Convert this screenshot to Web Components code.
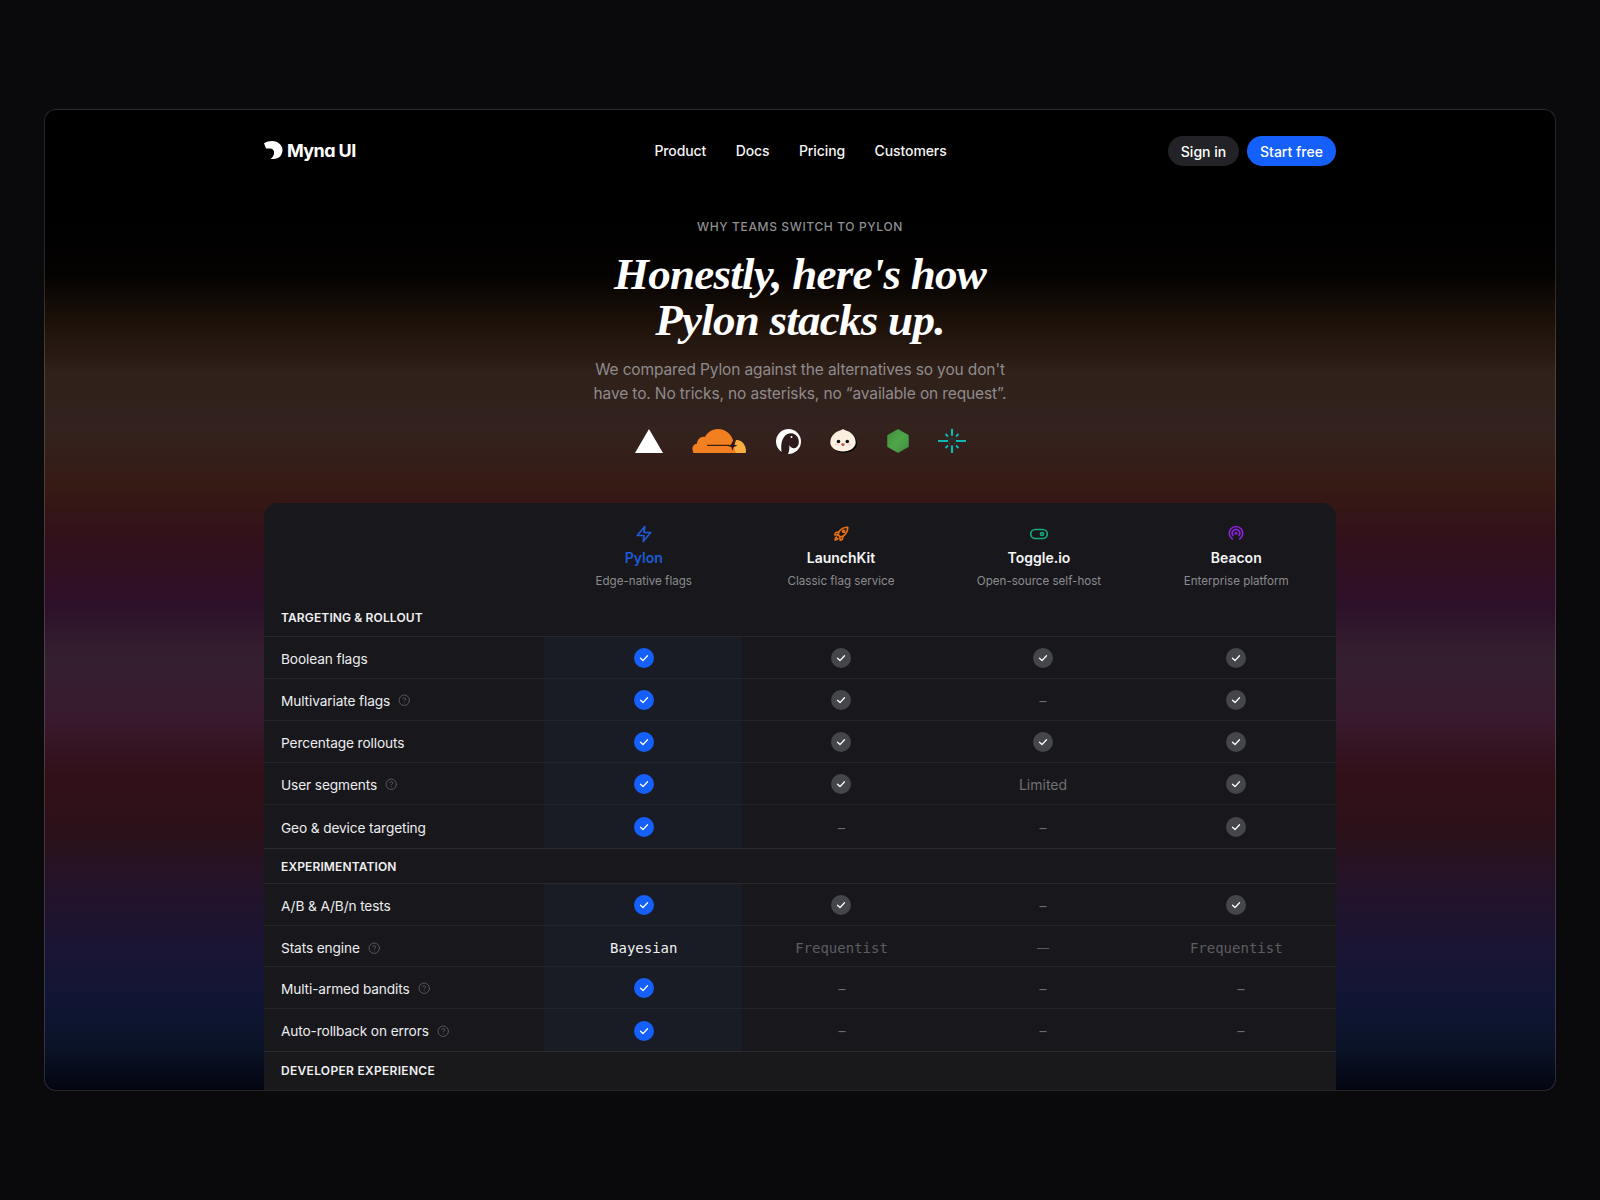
<!DOCTYPE html>
<html lang="en">
<head>
<meta charset="utf-8">
<title>Myna UI — Pylon comparison</title>
<style>
  html,body{margin:0;background:#0a0a0c;font-family:Inter,"Liberation Sans",sans-serif;color:#fff}
  body{display:flex;justify-content:center;padding-top:109px;height:1091px;overflow:hidden}
</style>
</head>
<body>
<app-frame>
  <site-nav></site-nav>
  <hero-block></hero-block>
  <brand-logos></brand-logos>
  <compare-table>
    <vendor-head></vendor-head>
    <section-row first>Targeting &amp; rollout</section-row>
    <feature-row cells="blue|gray|gray+4|gray" >Boolean flags</feature-row>
    <feature-row info cells="blue|gray|dash+4|gray">Multivariate flags</feature-row>
    <feature-row cells="blue|gray|gray+4|gray">Percentage rollouts</feature-row>
    <feature-row info cells="blue|gray|text:Limited+4|gray">User segments</feature-row>
    <feature-row end tall cells="blue|dash+.5|dash+4|gray">Geo &amp; device targeting</feature-row>
    <section-row>Experimentation</section-row>
    <feature-row cells="blue|gray|dash+4|gray">A/B &amp; A/B/n tests</feature-row>
    <feature-row info short cells="mono:Bayesian|mute:Frequentist+.5|mdash+4|mute:Frequentist">Stats engine</feature-row>
    <feature-row info cells="blue|dash+1|dash+4|dash+4">Multi-armed bandits</feature-row>
    <feature-row info end cells="blue|dash+1|dash+4|dash+4">Auto-rollback on errors</feature-row>
    <section-row tail>Developer experience</section-row>
  </compare-table>
</app-frame>

<script>
const shadow = (el, html) => { el.attachShadow({mode:'open'}).innerHTML = html; };

customElements.define('app-frame', class extends HTMLElement {
  constructor(){ super(); shadow(this, `<style>
    :host{display:block;width:1512px;height:982px;box-sizing:border-box;border:1px solid rgba(255,255,255,.15);border-radius:12px;overflow:hidden;
      background:linear-gradient(180deg,#000 0,#000 108px,#050302 166px,#1a0f08 206px,#30211a 263px,#33221e 321px,#361a14 378px,#32101c 435px,#2d1029 493px,#35202f 550px,#381a2e 608px,#321019 665px,#2b1119 722px,#23132a 780px,#1a1433 837px,#101633 895px,#0a1226 941px,#030510 981px)}
    .wrap{width:1072px;margin:0 auto;padding-top:26px;display:flex;flex-direction:column}
  </style><div class="wrap"><slot></slot></div>`); }
});

customElements.define('site-nav', class extends HTMLElement {
  constructor(){ super(); shadow(this, `<style>
    :host{display:grid;grid-template-columns:1fr auto 1fr;align-items:center;height:30px;font-size:14px;font-weight:450;color:#fff}
    .logo{display:flex;align-items:center;gap:4px;margin-top:-2px;font-size:18px;font-weight:700;letter-spacing:-.6px;font-feature-settings:"cv11"}
    .logo svg{display:block}
    nav{display:flex;gap:29.500px;margin:-2px 0 0 1px}
    nav a{color:#f4f4f5;letter-spacing:-.1px}
    .btns{display:flex;gap:8px;justify-content:flex-end}
    .b{height:30px;border-radius:15px;display:flex;align-items:center;justify-content:center;box-sizing:border-box}
    .s{width:71px;background:#232327}
    .p{width:89px;background:#1560fb}
  </style>
  <div class="logo"><svg width="19" height="18" viewBox="0 0 19 18"><path fill="#fff" d="M0 2.200C2.500.7 5 0 8 0c6 0 10.500 4 10.500 9 0 5-3.500 9-9 9H6.500c2.500-1.500 4-4.500 3.500-7.500-.4-2-2-3-4-3H2Z"/></svg><span>Myna UI</span></div>
  <nav><a>Product</a><a>Docs</a><a>Pricing</a><a>Customers</a></nav>
  <div class="btns"><div class="b s">Sign in</div><div class="b p">Start free</div></div>`); }
});

customElements.define('hero-block', class extends HTMLElement {
  constructor(){ super(); shadow(this, `<style>
    :host{display:flex;flex-direction:column;align-items:center;text-align:center;padding-top:53px}
    .eb{font-size:12px;line-height:16px;font-weight:500;letter-spacing:.63px;color:#8f8f92}
    h1{margin:16px 0 0;font:italic 700 45px/46px "Liberation Serif",serif;letter-spacing:-.75px;color:#fff}
    p{margin:15px 0 0;font-size:15.500px;line-height:24px;color:#8f8b8c;letter-spacing:-.13px}
  </style>
  <div class="eb">WHY TEAMS SWITCH TO PYLON</div>
  <h1>Honestly, here's how<br>Pylon stacks up.</h1>
  <p>We compared Pylon against the alternatives so you don't<br>have to. No tricks, no asterisks, no “available on request”.</p>`); }
});

customElements.define('brand-logos', class extends HTMLElement {
  constructor(){ super(); shadow(this, `<style>
    :host{display:flex;justify-content:center;align-items:center;gap:29.500px;margin:23px 0 0 1px;height:24px}
    svg{display:block;flex:none}
  </style>
  <svg width="28" height="24" viewBox="0 0 28 24"><path fill="#fff" d="M14 0 28 24H0Z"/></svg>
  <svg width="54" height="24" viewBox="0 0 54 24">
    <path fill="#fbad41" d="M40 24 44 11c6-.5 10 5 10 11.500 0 1-.5 1.500-1.500 1.500Z"/>
    <path fill="#f38020" d="M1.500 24C-.5 20 0 15.500 5 14.500 5.500 10 9 7 13 8 15 4 19.500 0 26 0c7 0 12.500 4 15 11v5l3 8Z"/>
    <rect x="15" y="15.800" width="22" height="1.100" fill="#2b1816"/>
    <path fill="#2b1816" d="m40.500 12 1.200 3.500 3.800 1.200-3.800 1.300-1.200 3.800-1.200-3.800-4.300-1.300 4.300-1.200Z"/>
  </svg>
  <svg width="25" height="25" viewBox="0 0 25 25">
    <circle cx="12.500" cy="12.500" r="12.500" fill="#fff"/>
    <path fill="#2d1a1a" d="M6 25C5 20 4.500 13 8 8c2.500-3.700 7.500-4.800 11-2.500 3.500 2.300 4.500 6.500 3.500 10-1 3-3.500 4.300-6 3.500-1.500-.5-2.500-1.500-3-3-.2 3 0 6-1.500 9Z"/>
    <circle cx="15.500" cy="8" r="1" fill="#fff"/>
  </svg>
  <svg width="27" height="24" viewBox="0 0 27 24">
    <path fill="#000" transform="translate(1.300 1.300)" d="M13 0c2 1.500 5 1.500 8 4 3.500 2.800 4.700 6 4.700 9.500 0 5-5.700 9-12.700 9S.3 18.500.3 13.500C.3 10 1.500 6.800 5 4c3-2.500 6-2.500 8-4Z"/>
    <path fill="#fbf0df" d="M13 0c2 1.500 5 1.500 8 4 3.500 2.800 4.700 6 4.700 9.500 0 5-5.700 9-12.700 9S.3 18.500.3 13.500C.3 10 1.500 6.800 5 4c3-2.500 6-2.500 8-4Z"/>
    <circle cx="8.500" cy="12.500" r="1.800" fill="#111"/><circle cx="17.300" cy="12.500" r="1.800" fill="#111"/>
    <path fill="#c8323c" d="M11.300 14.500h3.400c0 1.600-.8 2.400-1.700 2.400s-1.700-.8-1.700-2.400Z"/>
    <ellipse cx="6.300" cy="15.300" rx="1.600" ry=".9" fill="#f7c6c6"/><ellipse cx="19.700" cy="15.300" rx="1.600" ry=".9" fill="#f7c6c6"/>
  </svg>
  <svg width="22" height="24" viewBox="0 0 22 24">
    <defs><linearGradient id="g" x1="0" y1="0" x2="1" y2="1"><stop offset="0" stop-color="#3f8f3c"/><stop offset=".5" stop-color="#4fa54a"/><stop offset="1" stop-color="#3c8f40"/></linearGradient></defs>
    <path fill="url(#g)" stroke="url(#g)" stroke-width="1.500" stroke-linejoin="round" d="M11 1 21 6.700v10.600L11 23 1 17.300V6.700Z"/>
  </svg>
  <svg width="28" height="24" viewBox="0 0 28 24" stroke="#13b5b5" stroke-linecap="butt" fill="none">
    <path stroke-width="2.200" d="M0 12h10M18 12h10M14 0v6.700M14 16.500V24"/>
    <path stroke-width="1.800" d="m7.500 5 2.500 2.500M20.500 5 18 7.500M7.500 19 10 16.500M20.500 19 18 16.500"/>
    <path stroke="#1e3c3a" stroke-width="1.500" d="M11.500 16v-6.500h5V16"/>
  </svg>`); }
});

customElements.define('compare-table', class extends HTMLElement {
  constructor(){ super(); shadow(this, `<style>
    :host{display:block;margin-top:50px;background:#18181c;border-radius:14px 14px 0 0;font-size:13.700px;color:#ececee}
  </style><slot></slot>`); }
});

customElements.define('vendor-head', class extends HTMLElement {
  constructor(){ super();
    const col = (name,desc,color,icon,cls='') => `<div class="c ${cls}"><svg width="18" height="18" viewBox="0 0 24 24" fill="none" stroke="${color}" stroke-width="2.200" stroke-linecap="round" stroke-linejoin="round">${icon}</svg><b style="${cls=='p'?'color:'+color:''}">${name}</b><span>${desc}</span></div>`;
    shadow(this, `<style>
    :host{display:grid;grid-template-columns:280px repeat(4,198px);height:97px}
    .c{display:flex;flex-direction:column;align-items:center;padding-top:22px;box-sizing:border-box}
    .c svg{display:block}
    .p{padding-left:1.500px}
    .t{padding-right:1.500px}
    b{margin-top:5px;font-size:14px;line-height:20px;font-weight:600;color:#f4f4f5}
    span{margin-top:5px;font-size:11.600px;line-height:16px;color:#8b8b8f}
  </style><div></div>`
    + col('Pylon','Edge-native flags','#1d5bd8','<path d="M13 2 3 14h9l-1 8 10-12h-9l1-8z"/>','p')
    + col('LaunchKit','Classic flag service','#e86f15','<path d="M9.500 14.500C8 13 8 10.500 10 8c3-3.500 7-5 11-5 0 4-1.500 8-5 11-2.500 2-5 2-6.500.5Z"/><path d="M9 9.500 5 10l-1.500 3 4 .5"/><path d="m14.500 15-.5 4-3 1.500-.5-4"/><path d="M6 16c-1.500 1-2 4-2 4s3-.5 4-2"/><circle cx="15.500" cy="8.500" r="1.300"/>')
    + col('Toggle.io','Open-source self-host','#14a97f','<rect x="1" y="6" width="22" height="12" rx="6"/><circle cx="16" cy="12" r="2"/>')
    + col('Beacon','Enterprise platform','#8a22d6','<path d="M16.850 18.580a9 9 0 1 0-9.700 0"/><path d="M8 14a5 5 0 1 1 8 0"/><circle cx="12" cy="11" r="1"/>','t'));
  }
});

customElements.define('section-row', class extends HTMLElement {
  constructor(){ super(); shadow(this, `<style>
    :host{display:flex;align-items:center;box-sizing:border-box;height:35px;padding:0 17px;border-bottom:1px solid rgba(255,255,255,.07);
      font-size:12px;font-weight:600;letter-spacing:.13px;text-transform:uppercase;color:#f0f0f2}
    :host([first]){height:37px;padding-bottom:2px}
    :host([tail]){height:38px;padding-bottom:1px;border-bottom:0;background:#19191c;letter-spacing:.3px}
  </style><slot></slot>`); }
});

customElements.define('status-cell', class extends HTMLElement {
  constructor(){ super();
    const [spec, shift] = (this.getAttribute('spec')).split('+');
    const [kind, txt] = spec.split(':');
    const check = `<svg width="12" height="12" viewBox="0 0 12 12" fill="none" stroke="#fff" stroke-width="1.300" stroke-linecap="round" stroke-linejoin="round"><path d="M2.500 6.300 5 8.600 9.500 3.800"/></svg>`;
    const body = {
      blue:`<i class="dot bl">${check}</i>`, gray:`<i class="dot gr">${check}</i>`,
      dash:`<span class="da">–</span>`, mdash:`<span class="em">—</span>`,
      text:`<span class="tx">${txt}</span>`, mono:`<span class="mono">${txt}</span>`, mute:`<span class="mute">${txt}</span>`
    }[kind];
    shadow(this, `<style>
      :host{display:flex;align-items:center;justify-content:center;box-sizing:border-box;padding-top:1px;padding-left:${(shift||0)*2}px}
      :host([low]){padding-top:3px}
      :host([lead]){background:#191c25;padding-left:1.500px}
      :host([last]){padding-right:1.500px}
      .dot{display:flex;align-items:center;justify-content:center;width:20px;height:20px;border-radius:50%}
      .bl{background:#1560fb}.gr{background:#45464b}
      .da{color:#6c6c70;font-size:14px}
      .em{color:#5d5d62;font-size:12px}
      .tx{color:#707074;font-size:14px}
      .mono,.mute{font:14px "DejaVu Sans Mono",monospace}
      .mono{color:#f0f0f2}.mute{color:#5d5d62}
    </style>${body}`);
  }
});

customElements.define('feature-row', class extends HTMLElement {
  constructor(){ super();
    const cells = this.getAttribute('cells').split('|');
    const low = this.hasAttribute('short') ? ' low' : '';
    const info = this.hasAttribute('info') ? `<svg width="12.500" height="12.500" viewBox="0 0 24 24" fill="none" stroke="#5a5a5f" stroke-width="1.800" stroke-linecap="round" stroke-linejoin="round"><circle cx="12" cy="12" r="10"/><path d="M9.090 9a3 3 0 0 1 5.830 1c0 2-3 3-3 3"/><path d="M12 17h.010"/></svg>` : '';
    shadow(this, `<style>
      :host{display:grid;grid-template-columns:280px repeat(4,198px);height:42px;box-sizing:border-box;border-bottom:1px solid rgba(255,255,255,.06)}
      :host([short]){height:41px}
      :host([end]){height:43px;border-bottom-color:rgba(255,255,255,.09)}
      :host([tall]){height:44px}
      .l{display:flex;align-items:center;gap:8px;padding:2px 0 0 17px;letter-spacing:-.12px}
      :host([short]) .l{padding-top:4px}
      svg{display:block}
    </style><div class="l"><slot></slot>${info}</div>` +
      cells.map((c,i)=>`<status-cell spec="${c}"${low}${i==0?' lead':''}${i==3&&!c.includes('+')?' last':''}></status-cell>`).join(''));
  }
});
</script>
</body>
</html>
